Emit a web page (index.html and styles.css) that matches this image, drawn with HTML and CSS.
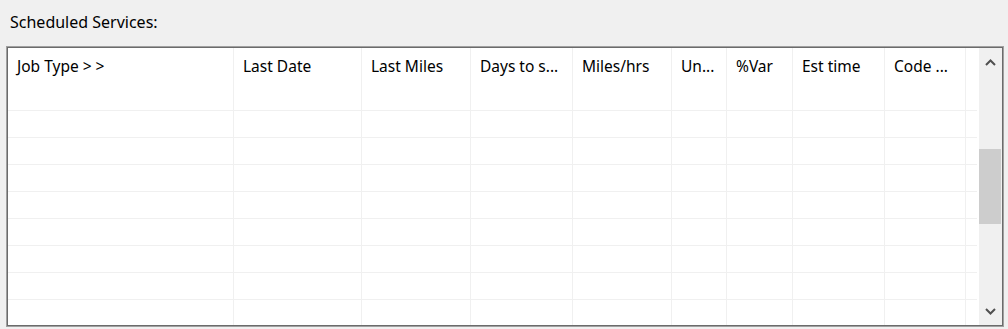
FILE: index.html
```html
<!DOCTYPE html>
<html>
<head>
<meta charset="utf-8">
<link rel="stylesheet" href="styles.css">
</head>
<body>
<div class="panel">
  <div class="caption">Scheduled Services:</div>
  <div class="listbox">
    <div class="grid">
      <div class="row head">
        <div class="cell c1">Job Type &gt; &gt;</div>
        <div class="cell c2">Last Date</div>
        <div class="cell c3">Last Miles</div>
        <div class="cell c4">Days to s...</div>
        <div class="cell c5">Miles/hrs</div>
        <div class="cell c6">Un...</div>
        <div class="cell c7">%Var</div>
        <div class="cell c8">Est time</div>
        <div class="cell c9">Code ...</div>
        <div class="cell c10"></div>
      </div>
      <div class="row"><div class="cell c1"></div><div class="cell c2"></div><div class="cell c3"></div><div class="cell c4"></div><div class="cell c5"></div><div class="cell c6"></div><div class="cell c7"></div><div class="cell c8"></div><div class="cell c9"></div><div class="cell c10"></div></div>
      <div class="row"><div class="cell c1"></div><div class="cell c2"></div><div class="cell c3"></div><div class="cell c4"></div><div class="cell c5"></div><div class="cell c6"></div><div class="cell c7"></div><div class="cell c8"></div><div class="cell c9"></div><div class="cell c10"></div></div>
      <div class="row"><div class="cell c1"></div><div class="cell c2"></div><div class="cell c3"></div><div class="cell c4"></div><div class="cell c5"></div><div class="cell c6"></div><div class="cell c7"></div><div class="cell c8"></div><div class="cell c9"></div><div class="cell c10"></div></div>
      <div class="row"><div class="cell c1"></div><div class="cell c2"></div><div class="cell c3"></div><div class="cell c4"></div><div class="cell c5"></div><div class="cell c6"></div><div class="cell c7"></div><div class="cell c8"></div><div class="cell c9"></div><div class="cell c10"></div></div>
      <div class="row"><div class="cell c1"></div><div class="cell c2"></div><div class="cell c3"></div><div class="cell c4"></div><div class="cell c5"></div><div class="cell c6"></div><div class="cell c7"></div><div class="cell c8"></div><div class="cell c9"></div><div class="cell c10"></div></div>
      <div class="row"><div class="cell c1"></div><div class="cell c2"></div><div class="cell c3"></div><div class="cell c4"></div><div class="cell c5"></div><div class="cell c6"></div><div class="cell c7"></div><div class="cell c8"></div><div class="cell c9"></div><div class="cell c10"></div></div>
      <div class="row"><div class="cell c1"></div><div class="cell c2"></div><div class="cell c3"></div><div class="cell c4"></div><div class="cell c5"></div><div class="cell c6"></div><div class="cell c7"></div><div class="cell c8"></div><div class="cell c9"></div><div class="cell c10"></div></div>
      <div class="row last"><div class="cell c1"></div><div class="cell c2"></div><div class="cell c3"></div><div class="cell c4"></div><div class="cell c5"></div><div class="cell c6"></div><div class="cell c7"></div><div class="cell c8"></div><div class="cell c9"></div><div class="cell c10"></div></div>
    </div>
    <div class="scrollbar">
      <div class="arrow">
        <svg width="11" height="7" viewBox="0 0 11 7"><path d="M1 6 L5.5 1.5 L10 6" fill="none" stroke="#505050" stroke-width="2"/></svg>
      </div>
      <div class="track"><div class="thumb"></div></div>
      <div class="arrow">
        <svg width="11" height="7" viewBox="0 0 11 7"><path d="M1 1 L5.5 5.5 L10 1" fill="none" stroke="#505050" stroke-width="2"/></svg>
      </div>
    </div>
  </div>
</div>
</body>
</html>
```
FILE: styles.css
```css
html, body {
  margin: 0;
  padding: 0;
  background: #f0f0f0;
}
body {
  font-family: "Noto Sans", "Open Sans", sans-serif;
  font-size: 15.5px;
  color: #000;
  width: 1008px;
  height: 329px;
  overflow: hidden;
}
.panel {
  padding: 10px 5px 0 6px;
}
.caption {
  padding-left: 4px;
  height: 26px;
  line-height: 25px;
  margin-bottom: 10px;
  font-size: 16px;
}
.listbox {
  display: flex;
  width: 994px;
  height: 277px;
  background: #fff;
  border: 1px solid #a0a0a0;
  box-shadow: inset 1px 1px 0 #6b6b6b, inset -1px -1px 0 #6b6b6b;
  padding: 1px;
  box-sizing: content-box;
}
.grid {
  width: 969px;
  height: 277px;
  overflow: hidden;
  display: flex;
  flex-direction: column;
}
.row {
  display: flex;
  height: 27px;
  flex: none;
  border-bottom: 1px solid #f0f0f0;
  box-sizing: border-box;
}
.row.head {
  height: 63px;
}
.cell {
  flex: none;
  box-sizing: border-box;
  border-right: 1px solid #f0f0f0;
  padding: 7px 0 0 9px;
  white-space: nowrap;
  overflow: hidden;
}
.c1 { width: 226px; }
.c2 { width: 128px; }
.c3 { width: 109px; }
.c4 { width: 102px; }
.c5 { width: 99px; }
.c6 { width: 55px; }
.c7 { width: 66px; }
.c8 { width: 92px; }
.c9 { width: 81px; }
.c10 { width: 11px; border-right: none; }
.scrollbar {
  width: 23px;
  height: 277px;
  background: #f0f0f0;
  display: flex;
  flex-direction: column;
  margin-left: 2px;
}
.arrow {
  height: 28px;
  display: flex;
  align-items: center;
  justify-content: center;
  flex: none;
}
.track {
  flex: 1;
  padding-top: 73px;
}
.thumb {
  width: 22px;
  height: 75px;
  background: #cdcdcd;
}
```
